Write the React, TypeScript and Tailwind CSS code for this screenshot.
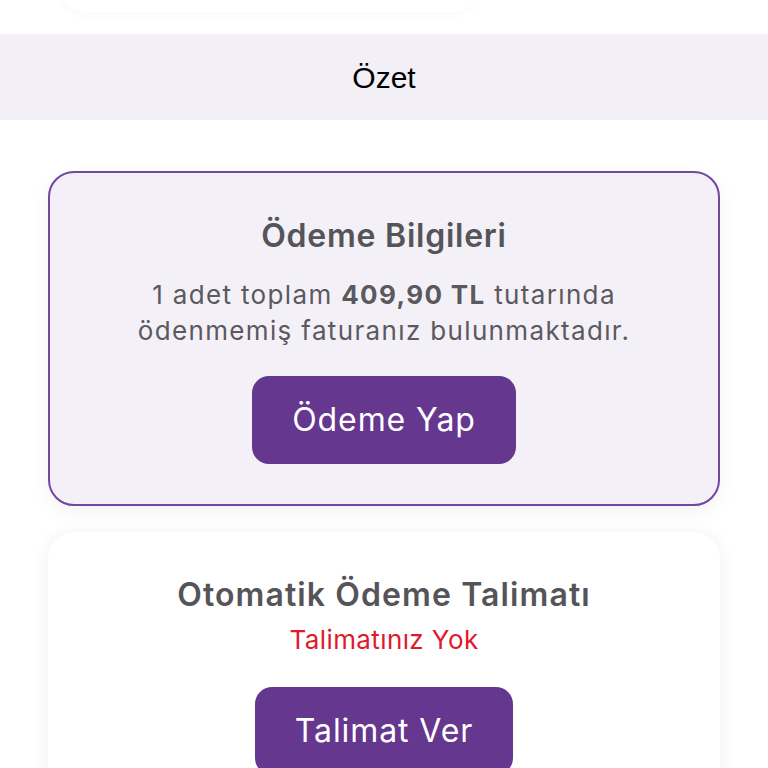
export default function App() {
  return (
    <div className="min-h-screen bg-white font-['Inter',sans-serif] overflow-hidden">
      {/* faint previous card edge */}
      <div className="h-[34px] relative">
        <div className="absolute left-[60px] right-[290px] -top-10 h-[52px] bg-white rounded-3xl shadow-[0_3px_10px_rgba(0,0,0,0.025)]" />
      </div>

      {/* Section header */}
      <div className="h-[86px] bg-[#f2f0f6] flex items-center justify-center">
        <span className="text-[30px] text-black font-['Liberation_Sans',sans-serif]">Özet</span>
      </div>

      <div className="px-[48px] pt-[51px] flex flex-col gap-[26px]">
        {/* Payment info card */}
        <div className="rounded-[26px] border-2 border-[#7147a0] bg-[#f4f0f8] pt-[44px] pb-[40px] flex flex-col items-center shadow-[0_6px_20px_rgba(0,0,0,0.05)]">
          <h2 className="text-[32px] leading-[38px] font-semibold text-[#555459] tracking-[0.75px]">Ödeme Bilgileri</h2>
          <p className="mt-[22px] text-[26px] leading-[36px] text-[#5a595e] text-center tracking-[1.35px]">
            1 adet toplam <span className="font-bold">409,90 TL</span> tutarında
            <br />
            ödenmemiş faturanız bulunmaktadır.
          </p>
          <button className="mt-[27px] h-[88px] px-[40px] rounded-[17px] bg-[#65378f] text-white text-[32px] tracking-[0.9px]">
            Ödeme Yap
          </button>
        </div>

        {/* Auto payment card */}
        <div className="rounded-[26px] bg-white pt-[44px] pb-[40px] flex flex-col items-center shadow-[0_2px_18px_rgba(0,0,0,0.07)]">
          <h2 className="text-[32px] leading-[38px] font-semibold text-[#555459] tracking-[1.1px]">Otomatik Ödeme Talimatı</h2>
          <p className="mt-[8px] text-[26px] leading-[36px] text-[#e0192c] tracking-[0.4px]">Talimatınız Yok</p>
          <button className="mt-[29px] h-[88px] px-[40px] rounded-[17px] bg-[#65378f] text-white text-[32px] tracking-[0.9px]">
            Talimat Ver
          </button>
        </div>
      </div>
    </div>
  )
}
